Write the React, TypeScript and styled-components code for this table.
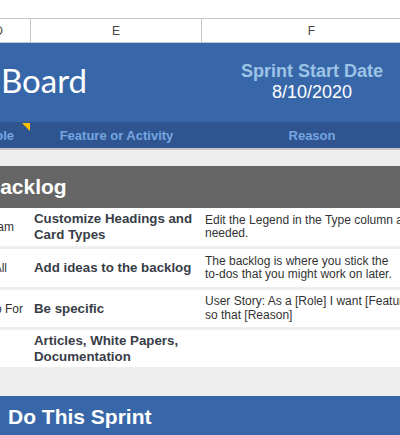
import React from 'react';
import styled, { createGlobalStyle } from 'styled-components';

const GlobalStyle = createGlobalStyle`
    html, body {
        margin: 0;
        padding: 0;
        background: #ffffff;
        overflow: hidden;
    }
    body {
        font-family: "Liberation Sans", Arial, sans-serif;
    }
`;

const COLS = '31px 171px 220px';

const Viewport = styled.div`
    width: 400px;
    height: 435px;
    overflow: hidden;
    background: #ffffff;
`;

const Sheet = styled.div`
    width: 422px;
    padding-top: 18px;
`;

const ColumnHeader = styled.div`
    display: grid;
    grid-template-columns: ${COLS};
    height: 23px;
    border-top: 1px solid #c6c6c6;
    border-bottom: 1px solid #c6c6c6;
`;

const ColumnCell = styled.div<{ $shift?: number }>`
    display: flex;
    align-items: center;
    justify-content: ${props => (props.$shift !== undefined ? 'flex-end' : 'center')};
    padding-right: ${props => props.$shift ?? 0}px;
    border-right: 1px solid #c6c6c6;
    font-size: 12px;
    color: #444444;
    white-space: nowrap;
    overflow: hidden;
`;

const TitleBand = styled.div`
    display: grid;
    grid-template-columns: 202px 220px;
    height: 79px;
    background: #3867a9;
`;

const BoardTitle = styled.div`
    font-family: Lato, "Liberation Sans", sans-serif;
    font-size: 33px;
    line-height: 40px;
    color: #ffffff;
    padding: 17px 0 0 1px;
`;

const DateBlock = styled.div`
    display: flex;
    flex-direction: column;
    align-items: center;
    padding-top: 18px;
`;

const DateLabel = styled.div`
    font-size: 18px;
    font-weight: bold;
    color: #9dc3e6;
    line-height: 20px;
`;

const DateValue = styled.div`
    font-size: 18px;
    color: #ffffff;
    line-height: 22px;
`;

const SubHeader = styled.div`
    display: grid;
    grid-template-columns: ${COLS};
    height: 26px;
    background: #2f5591;
    border-bottom: 2px solid #c4c4c4;
`;

const SubCell = styled.div<{ $shift?: number }>`
    position: relative;
    display: flex;
    align-items: center;
    justify-content: ${props => (props.$shift !== undefined ? 'flex-end' : 'center')};
    padding-right: ${props => props.$shift ?? 0}px;
    font-size: 13px;
    font-weight: bold;
    color: #76a5e0;
    white-space: nowrap;
    overflow: hidden;
`;

const CommentMark = styled.span`
    position: absolute;
    top: 1px;
    right: 1px;
    width: 0;
    height: 0;
    border-top: 8px solid #ffc000;
    border-left: 8px solid transparent;
`;

const Gap = styled.div<{ $h: number }>`
    height: ${props => props.$h}px;
    background: #eeeeee;
`;

const SectionBand = styled.div<{ $bg: string }>`
    display: flex;
    align-items: center;
    height: 42px;
    background: ${props => props.$bg};
    font-size: 21px;
    font-weight: bold;
    color: #ffffff;
    white-space: nowrap;
    overflow: hidden;
`;

const SectionTitle = styled.span<{ $x: number }>`
    margin-left: ${props => props.$x}px;
`;

const Rows = styled.div`
    display: flex;
    flex-direction: column;
    gap: 3px;
    background: #eeeeee;
`;

const Row = styled.div<{ $h: number }>`
    display: grid;
    grid-template-columns: ${COLS};
    height: ${props => props.$h}px;
    background: #ffffff;
`;

const LabelCell = styled.div<{ $shift: number }>`
    display: flex;
    align-items: center;
    justify-content: flex-end;
    padding-right: ${props => props.$shift}px;
    font-size: 12px;
    color: #333333;
    white-space: nowrap;
    overflow: hidden;
`;

const CardTitle = styled.div`
    display: flex;
    align-items: center;
    padding: 0 3px;
    font-size: 13.3px;
    font-weight: bold;
    line-height: 16px;
    color: #383d47;
`;

const CardReason = styled.div`
    display: flex;
    align-items: center;
    padding: 0 3px;
    font-size: 12px;
    line-height: 13.5px;
    color: #333333;
`;

const NoBreak = styled.span`
    white-space: nowrap;
`;

const backlog = [
    { label: 'Team', shift: 17, title: 'Customize Headings and Card Types', reason: <>Edit the Legend in the Type column as needed.</>, h: 38 },
    { label: 'All', shift: 24, title: 'Add ideas to the backlog', reason: <>The backlog is where you stick the <NoBreak>to-dos</NoBreak> that you might work on later.</>, h: 38 },
    { label: 'Go To For', shift: 8, title: 'Be specific', reason: <>User Story: As a [Role] I want [Feature] so that [Reason]</>, h: 37 },
    { label: '', shift: 0, title: 'Articles, White Papers, Documentation', reason: null, h: 37 },
];

const App = () => {
    return (
        <Viewport>
            <GlobalStyle />
            <Sheet>
                <ColumnHeader>
                    <ColumnCell $shift={27}>D</ColumnCell>
                    <ColumnCell>E</ColumnCell>
                    <ColumnCell>F</ColumnCell>
                </ColumnHeader>
                <TitleBand>
                    <BoardTitle>Board</BoardTitle>
                    <DateBlock>
                        <DateLabel>Sprint Start Date</DateLabel>
                        <DateValue>8/10/2020</DateValue>
                    </DateBlock>
                </TitleBand>
                <SubHeader>
                    <SubCell $shift={17}>
                        Role
                        <CommentMark />
                    </SubCell>
                    <SubCell>Feature or Activity</SubCell>
                    <SubCell>Reason</SubCell>
                </SubHeader>
                <Gap $h={16} />
                <SectionBand $bg="#666666">
                    <SectionTitle $x={-15}>Backlog</SectionTitle>
                </SectionBand>
                <Rows>
                    {backlog.map(item => (
                        <Row key={item.title} $h={item.h}>
                            <LabelCell $shift={item.shift}>{item.label}</LabelCell>
                            <CardTitle>{item.title}</CardTitle>
                            <CardReason>
                                <div>{item.reason}</div>
                            </CardReason>
                        </Row>
                    ))}
                </Rows>
                <Gap $h={29} />
                <SectionBand $bg="#3867a9">
                    <SectionTitle $x={8}>Do This Sprint</SectionTitle>
                </SectionBand>
            </Sheet>
        </Viewport>
    );
};

export default App;
